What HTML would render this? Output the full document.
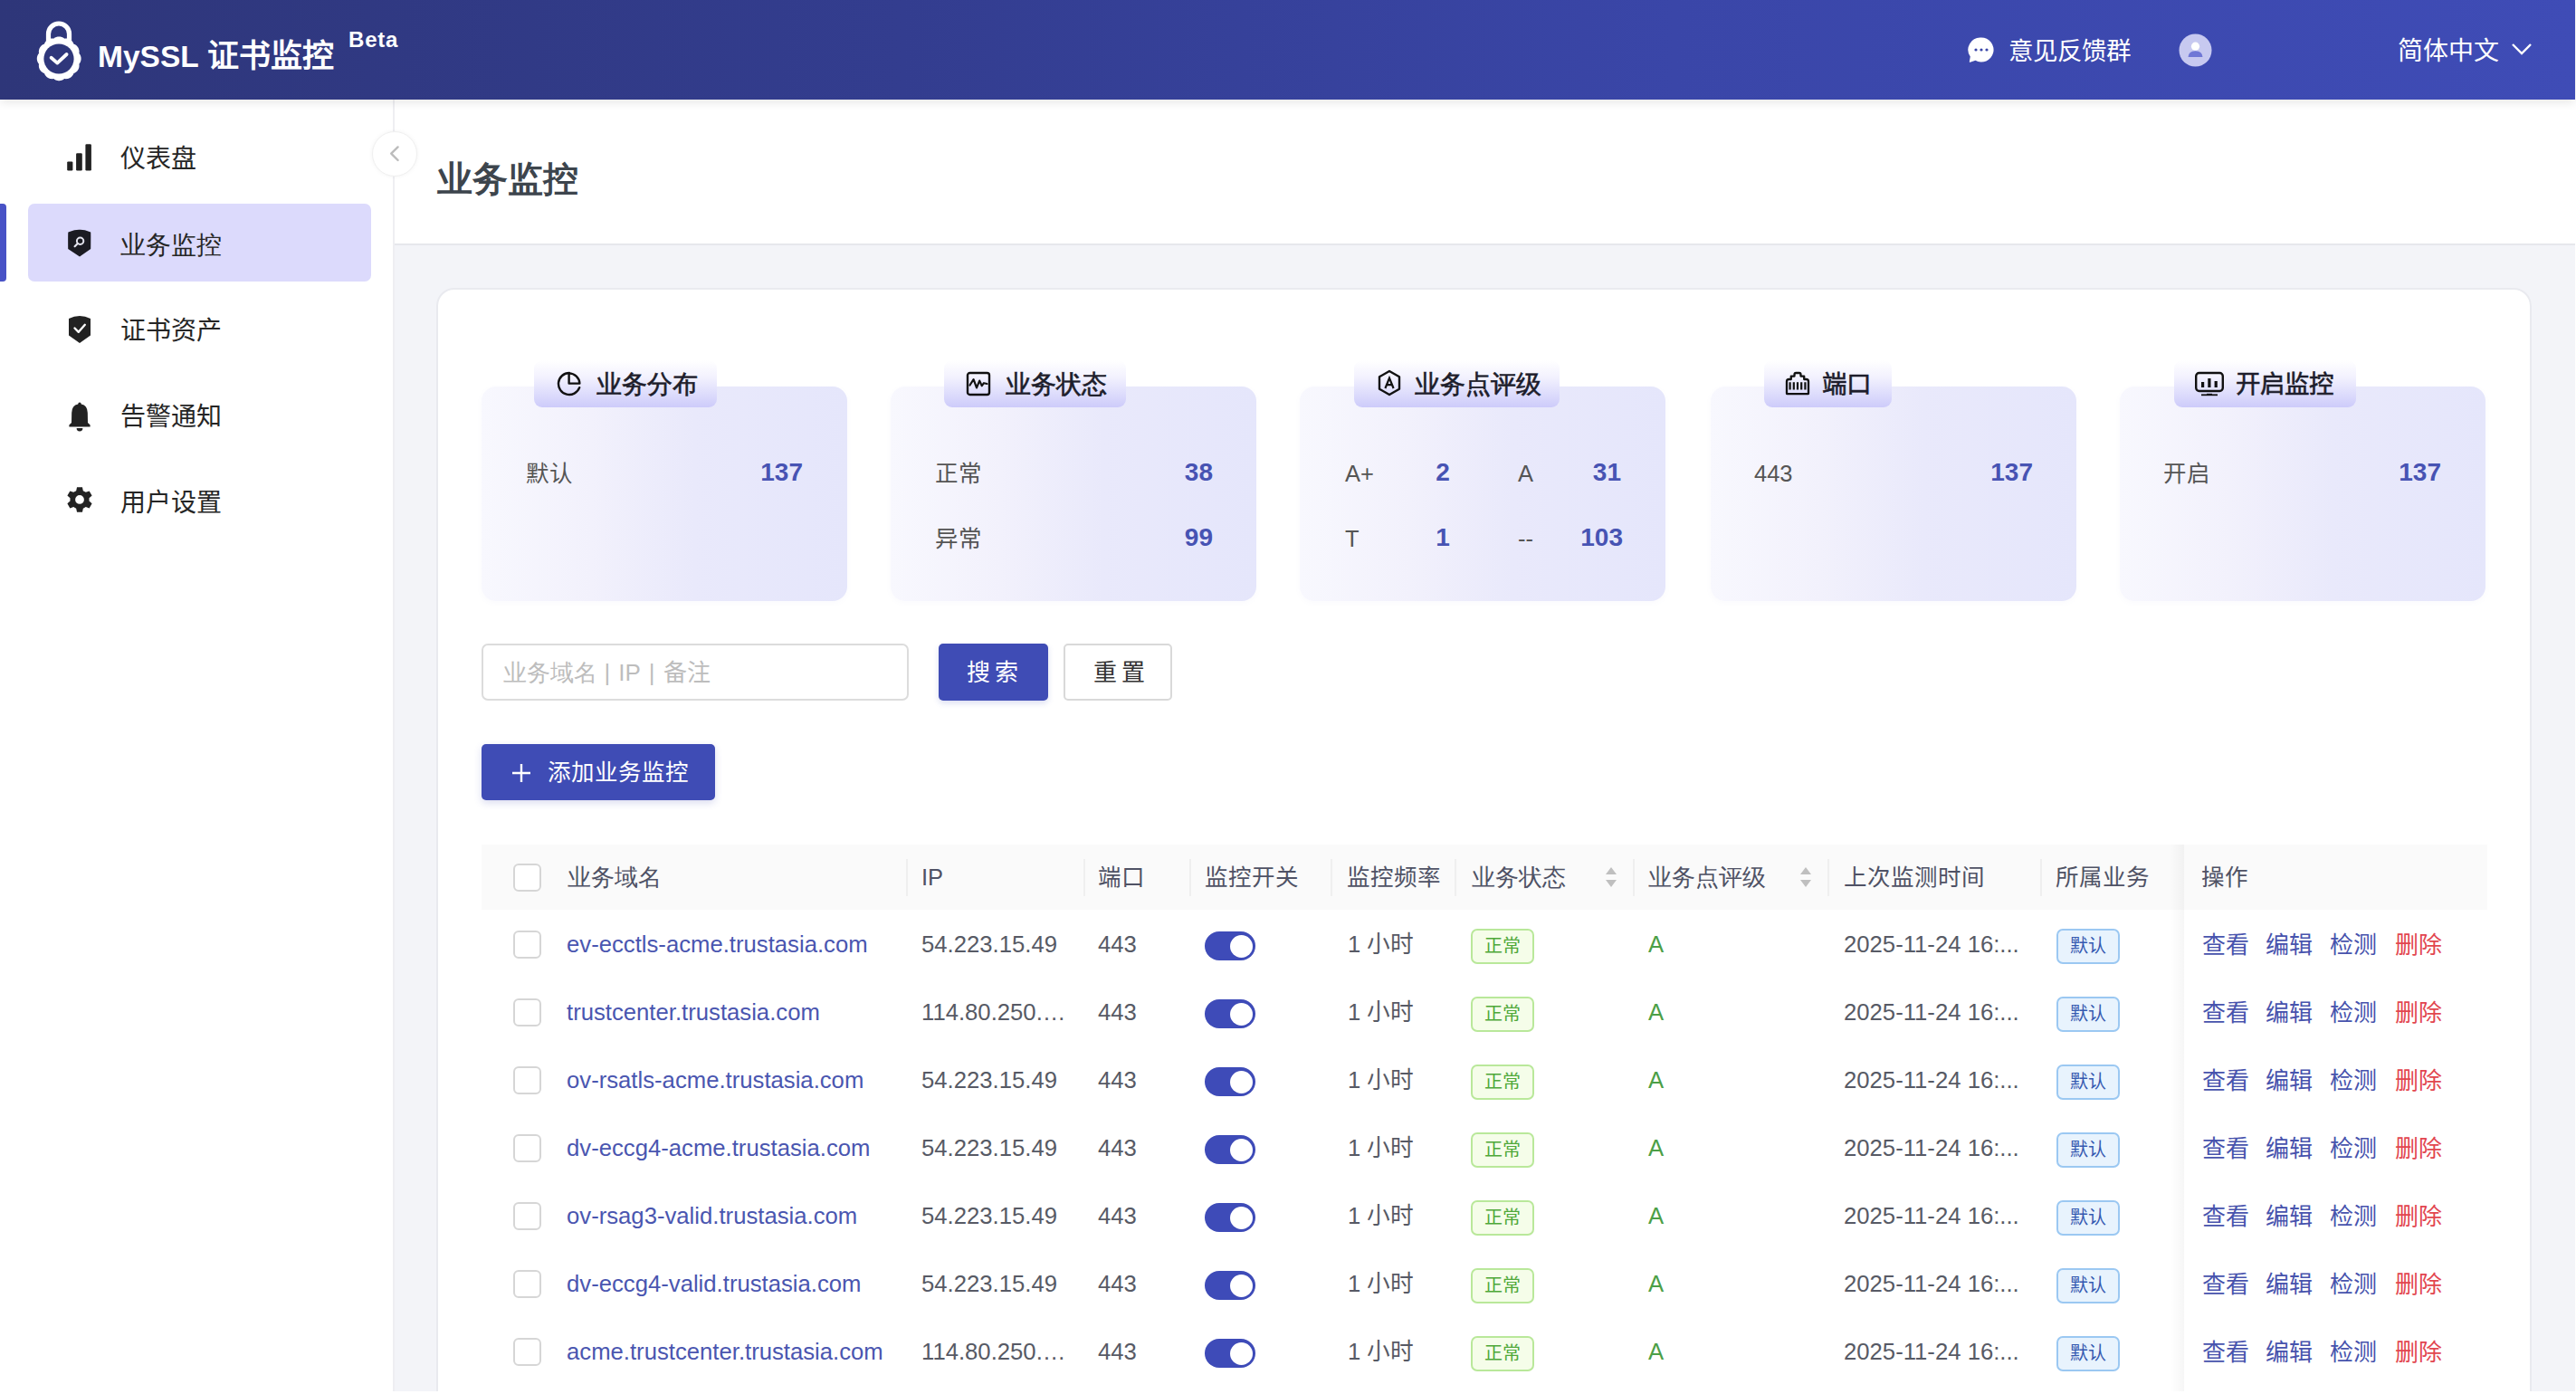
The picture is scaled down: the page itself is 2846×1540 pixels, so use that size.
<!DOCTYPE html>
<html lang="zh-CN">
<head>
<meta charset="utf-8">
<title>MySSL 证书监控</title>
<style>
*{box-sizing:border-box;margin:0;padding:0}
html,body{width:2846px;height:1540px;overflow:hidden;background:#fff}
body{position:relative;font-family:"Liberation Sans",sans-serif;color:#222}
.abs{position:absolute}
.t{position:absolute;white-space:nowrap;line-height:1}
/* header */
#hd{left:0;top:0;width:2845px;height:110px;background:linear-gradient(90deg,#2e3679 0%,#333d8f 35%,#3a46a8 65%,#3f4cb6 100%);box-shadow:0 3px 10px rgba(0,0,0,.10);z-index:5}
#side{left:0;top:110px;width:434px;height:1427px;background:#fff}
#sideb{left:434px;top:110px;width:2px;height:1427px;background:#eeeef2}
#main{left:436px;top:110px;width:2409px;height:1427px;background:#f3f4f8}
#ph{left:436px;top:110px;width:2409px;height:161px;background:#fff;border-bottom:2px solid #e6e7ec}
#card{left:482px;top:318px;width:2315px;height:1260px;background:#fff;border:2px solid #e9eaef;border-radius:20px}

.sc{position:absolute;top:427px;width:404px;height:237px;border-radius:16px;background:linear-gradient(90deg,#f8f8fe 0%,#f2f1fc 30%,#e9e9fb 58%,#e5e6fb 100%);box-shadow:0 2px 6px rgba(120,120,200,.04)}
.tab{position:absolute;top:398px;height:52px;border-radius:9px;background:linear-gradient(180deg,rgba(255,255,255,0) 0%,#f3f2fe 35%,#dddcfc 72%,#cdcbfa 100%);}
.tab svg{position:absolute}
.tab .tt{position:absolute;top:13px;font-size:27.5px;line-height:1;font-weight:400;color:#1d1d2b;white-space:nowrap;-webkit-text-stroke:0.6px #1d1d2b}
.lb{position:absolute;font-size:25.5px;line-height:1;color:#555;white-space:nowrap}
.nb{position:absolute;font-size:28px;line-height:1;font-weight:700;color:#4753b3;white-space:nowrap}

.inp{position:absolute;left:532px;top:711px;width:472px;height:63px;border:2px solid #dcdcdc;border-radius:7px;background:#fff}
.btn{position:absolute;top:711px;height:63px;border-radius:5px;font-size:26px;line-height:1;white-space:nowrap}
.th{position:absolute;top:957px;font-size:25.5px;line-height:1;color:#4f5265;white-space:nowrap}
.sep{position:absolute;top:949px;width:2px;height:41px;background:#efefef}
.cb{position:absolute;width:31px;height:31px;border:2px solid #d6d6d6;border-radius:6px;background:#fff}
.td{position:absolute;font-size:25.7px;line-height:1;color:#575a65;white-space:nowrap}
.dm{color:#4a56b0}
.sw{position:absolute;width:56px;height:32px;border-radius:16px;background:#3e4bb8}
.sw:after{content:"";position:absolute;right:3px;top:3.5px;width:25px;height:25px;border-radius:50%;background:#fff}
.tg{position:absolute;width:70px;height:39px;border-radius:7px;font-size:20px;line-height:35px;text-align:center}
.ok{background:#f5fde9;border:2px solid #b9e89a;color:#4fa83a}
.df{background:#e8f3fd;border:2px solid #9bc8f2;color:#3559b0}
.ac{position:absolute;font-size:26px;line-height:1;color:#4753ad;white-space:nowrap}
.del{color:#e2464f}
</style>
</head>
<body>
<div id="main" class="abs"></div>
<div id="side" class="abs"></div>
<div id="sideb" class="abs"></div>
<div id="ph" class="abs"></div>
<div id="card" class="abs"></div>

<div class="abs" style="left:0;top:225px;width:7px;height:86px;background:#4852c6;border-radius:0 4px 4px 0"></div>
<div class="abs" style="left:31px;top:225px;width:379px;height:86px;background:#dcdafc;border-radius:7px"></div>
<svg class="abs" style="left:72px;top:157px" width="32" height="34" viewBox="0 0 32 34">
  <rect x="2.2" y="21.4" width="6.2" height="10.1" rx="1.2" fill="#222"/>
  <rect x="12.1" y="12.2" width="6.7" height="19.3" rx="1.2" fill="#222"/>
  <rect x="22.4" y="2.3" width="6.5" height="29.2" rx="1.2" fill="#222"/>
</svg>
<div class="t" style="left:133px;top:162px;font-size:28px;color:#262626">仪表盘</div>
<svg class="abs" style="left:72px;top:251px" width="32" height="35" viewBox="0 0 32 35">
  <path d="M16 2.8 Q22 2.6 28.2 5.6 Q28.4 6 28.2 24 L16 32.6 L3.2 24 Q3 6 3.4 5.6 Q10 2.6 16 2.8 Z" fill="#1b1b22"/>
  <circle cx="16.6" cy="15.2" r="3.7" fill="none" stroke="#e4e4ee" stroke-width="2"/>
  <path d="M13.8 18 L10.6 21.2" stroke="#e4e4ee" stroke-width="2.2" stroke-linecap="round"/>
</svg>
<div class="t" style="left:133px;top:257px;font-size:28px;color:#262626">业务监控</div>
<svg class="abs" style="left:72px;top:347px" width="32" height="35" viewBox="0 0 32 35">
  <path d="M16 2 Q22 2 28 5 L28 23.5 L16 32 L4 23.5 L4 5 Q10 2 16 2 Z" fill="#222"/>
  <path d="M10.5 15.5 L14.8 19.8 L21.8 11.8" fill="none" stroke="#fff" stroke-width="2.4" stroke-linecap="round" stroke-linejoin="round"/>
</svg>
<div class="t" style="left:133px;top:352px;font-size:28px;color:#262626">证书资产</div>
<svg class="abs" style="left:72px;top:443px" width="32" height="34" viewBox="0 0 32 34">
  <path d="M16 1.5 Q17.6 1.5 17.8 3.6 Q24.6 5 24.8 13 L25 24 L27.6 26.6 L27.6 28.4 L4.4 28.4 L4.4 26.6 L7 24 L7.2 13 Q7.4 5 14.2 3.6 Q14.4 1.5 16 1.5 Z" fill="#222"/>
  <path d="M12.6 30 A3.4 3.4 0 0 0 19.4 30 Z" fill="#222"/>
</svg>
<div class="t" style="left:133px;top:447px;font-size:28px;color:#262626">告警通知</div>
<svg class="abs" style="left:71px;top:536px" width="34" height="34" viewBox="0 0 32 32">
  <path fill="#222" fill-rule="evenodd" d="M13.2 2 L18.8 2 L19.6 5.8 L22.4 7.4 L26 6.1 L28.8 10.9 L25.9 13.5 L25.9 16.5 L28.8 19.1 L26 23.9 L22.4 22.6 L19.6 24.2 L18.8 28 L13.2 28 L12.4 24.2 L9.6 22.6 L6 23.9 L3.2 19.1 L6.1 16.5 L6.1 13.5 L3.2 10.9 L6 6.1 L9.6 7.4 L12.4 5.8 Z M16 10.4 A4.6 4.6 0 1 0 16 19.6 A4.6 4.6 0 1 0 16 10.4 Z"/>
</svg>
<div class="t" style="left:133px;top:542px;font-size:28px;color:#262626">用户设置</div>
<div class="abs" style="left:411px;top:145px;width:50px;height:50px;border-radius:50%;background:#fff;border:1px solid #f0f0f0;box-shadow:0 0 5px rgba(0,0,0,.05)"></div>
<svg class="abs" style="left:426px;top:159px" width="22" height="22" viewBox="0 0 22 22">
  <path d="M13.6 3.4 L6.2 10.6 L13.6 18" fill="none" stroke="#bcbcbc" stroke-width="2.4" stroke-linecap="round" stroke-linejoin="round"/>
</svg>
<div class="t" style="left:483px;top:179px;font-size:38.5px;font-weight:700;color:#3d454d">业务监控</div>


<div id="hd" class="abs">
  <svg class="abs" style="left:40px;top:23px" width="52" height="68" viewBox="0 0 52 68">
    <path d="M13.5 24 V14.5 A11.5 11.5 0 0 1 36.5 14.5 V24" fill="none" stroke="#fff" stroke-width="5.2"/>
    <path fill="#fff" d="M25.20 17.40 L25.63 17.41 L26.05 17.44 L26.47 17.49 L26.89 17.56 L27.31 17.66 L27.73 17.77 L28.13 17.90 L28.54 18.05 L28.94 18.21 L29.33 18.40 L29.71 18.60 L30.08 18.83 L30.45 19.07 L30.80 19.34 L31.13 19.68 L31.58 19.55 L32.02 19.49 L32.46 19.46 L32.89 19.46 L33.33 19.47 L33.76 19.51 L34.19 19.56 L34.61 19.63 L35.03 19.72 L35.44 19.83 L35.85 19.96 L36.25 20.11 L36.64 20.28 L37.03 20.47 L37.40 20.67 L37.76 20.89 L38.12 21.13 L38.46 21.39 L38.79 21.66 L39.10 21.95 L39.40 22.25 L39.69 22.57 L39.97 22.90 L40.23 23.24 L40.47 23.60 L40.70 23.97 L40.92 24.35 L41.11 24.74 L41.28 25.15 L41.39 25.61 L41.85 25.72 L42.26 25.89 L42.65 26.08 L43.03 26.30 L43.40 26.53 L43.76 26.77 L44.10 27.03 L44.43 27.31 L44.75 27.60 L45.05 27.90 L45.34 28.21 L45.61 28.54 L45.87 28.88 L46.11 29.24 L46.33 29.60 L46.53 29.97 L46.72 30.36 L46.89 30.75 L47.04 31.15 L47.17 31.56 L47.28 31.97 L47.37 32.39 L47.44 32.81 L47.49 33.24 L47.53 33.67 L47.54 34.11 L47.54 34.54 L47.51 34.98 L47.45 35.42 L47.32 35.87 L47.66 36.20 L47.93 36.55 L48.17 36.92 L48.40 37.29 L48.60 37.67 L48.79 38.06 L48.95 38.46 L49.10 38.87 L49.23 39.27 L49.34 39.69 L49.44 40.11 L49.51 40.53 L49.56 40.95 L49.59 41.37 L49.60 41.80 L49.59 42.23 L49.56 42.65 L49.51 43.07 L49.44 43.49 L49.34 43.91 L49.23 44.33 L49.10 44.73 L48.95 45.14 L48.79 45.54 L48.60 45.93 L48.40 46.31 L48.17 46.68 L47.93 47.05 L47.66 47.40 L47.32 47.73 L47.45 48.18 L47.51 48.62 L47.54 49.06 L47.54 49.49 L47.53 49.93 L47.49 50.36 L47.44 50.79 L47.37 51.21 L47.28 51.63 L47.17 52.04 L47.04 52.45 L46.89 52.85 L46.72 53.24 L46.53 53.63 L46.33 54.00 L46.11 54.36 L45.87 54.72 L45.61 55.06 L45.34 55.39 L45.05 55.70 L44.75 56.00 L44.43 56.29 L44.10 56.57 L43.76 56.83 L43.40 57.07 L43.03 57.30 L42.65 57.52 L42.26 57.71 L41.85 57.88 L41.39 57.99 L41.28 58.45 L41.11 58.86 L40.92 59.25 L40.70 59.63 L40.47 60.00 L40.23 60.36 L39.97 60.70 L39.69 61.03 L39.40 61.35 L39.10 61.65 L38.79 61.94 L38.46 62.21 L38.12 62.47 L37.76 62.71 L37.40 62.93 L37.03 63.13 L36.64 63.32 L36.25 63.49 L35.85 63.64 L35.44 63.77 L35.03 63.88 L34.61 63.97 L34.19 64.04 L33.76 64.09 L33.33 64.13 L32.89 64.14 L32.46 64.14 L32.02 64.11 L31.58 64.05 L31.13 63.92 L30.80 64.26 L30.45 64.53 L30.08 64.77 L29.71 65.00 L29.33 65.20 L28.94 65.39 L28.54 65.55 L28.13 65.70 L27.73 65.83 L27.31 65.94 L26.89 66.04 L26.47 66.11 L26.05 66.16 L25.63 66.19 L25.20 66.20 L24.77 66.19 L24.35 66.16 L23.93 66.11 L23.51 66.04 L23.09 65.94 L22.67 65.83 L22.27 65.70 L21.86 65.55 L21.46 65.39 L21.07 65.20 L20.69 65.00 L20.32 64.77 L19.95 64.53 L19.60 64.26 L19.27 63.92 L18.82 64.05 L18.38 64.11 L17.94 64.14 L17.51 64.14 L17.07 64.13 L16.64 64.09 L16.21 64.04 L15.79 63.97 L15.37 63.88 L14.96 63.77 L14.55 63.64 L14.15 63.49 L13.76 63.32 L13.37 63.13 L13.00 62.93 L12.64 62.71 L12.28 62.47 L11.94 62.21 L11.61 61.94 L11.30 61.65 L11.00 61.35 L10.71 61.03 L10.43 60.70 L10.17 60.36 L9.93 60.00 L9.70 59.63 L9.48 59.25 L9.29 58.86 L9.12 58.45 L9.01 57.99 L8.55 57.88 L8.14 57.71 L7.75 57.52 L7.37 57.30 L7.00 57.07 L6.64 56.83 L6.30 56.57 L5.97 56.29 L5.65 56.00 L5.35 55.70 L5.06 55.39 L4.79 55.06 L4.53 54.72 L4.29 54.36 L4.07 54.00 L3.87 53.63 L3.68 53.24 L3.51 52.85 L3.36 52.45 L3.23 52.04 L3.12 51.63 L3.03 51.21 L2.96 50.79 L2.91 50.36 L2.87 49.93 L2.86 49.49 L2.86 49.06 L2.89 48.62 L2.95 48.18 L3.08 47.73 L2.74 47.40 L2.47 47.05 L2.23 46.68 L2.00 46.31 L1.80 45.93 L1.61 45.54 L1.45 45.14 L1.30 44.73 L1.17 44.33 L1.06 43.91 L0.96 43.49 L0.89 43.07 L0.84 42.65 L0.81 42.23 L0.80 41.80 L0.81 41.37 L0.84 40.95 L0.89 40.53 L0.96 40.11 L1.06 39.69 L1.17 39.27 L1.30 38.87 L1.45 38.46 L1.61 38.06 L1.80 37.67 L2.00 37.29 L2.23 36.92 L2.47 36.55 L2.74 36.20 L3.08 35.87 L2.95 35.42 L2.89 34.98 L2.86 34.54 L2.86 34.11 L2.87 33.67 L2.91 33.24 L2.96 32.81 L3.03 32.39 L3.12 31.97 L3.23 31.56 L3.36 31.15 L3.51 30.75 L3.68 30.36 L3.87 29.97 L4.07 29.60 L4.29 29.24 L4.53 28.88 L4.79 28.54 L5.06 28.21 L5.35 27.90 L5.65 27.60 L5.97 27.31 L6.30 27.03 L6.64 26.77 L7.00 26.53 L7.37 26.30 L7.75 26.08 L8.14 25.89 L8.55 25.72 L9.01 25.61 L9.12 25.15 L9.29 24.74 L9.48 24.35 L9.70 23.97 L9.93 23.60 L10.17 23.24 L10.43 22.90 L10.71 22.57 L11.00 22.25 L11.30 21.95 L11.61 21.66 L11.94 21.39 L12.28 21.13 L12.64 20.89 L13.00 20.67 L13.37 20.47 L13.76 20.28 L14.15 20.11 L14.55 19.96 L14.96 19.83 L15.37 19.72 L15.79 19.63 L16.21 19.56 L16.64 19.51 L17.07 19.47 L17.51 19.46 L17.94 19.46 L18.38 19.49 L18.82 19.55 L19.27 19.68 L19.60 19.34 L19.95 19.07 L20.32 18.83 L20.69 18.60 L21.07 18.40 L21.46 18.21 L21.86 18.05 L22.27 17.90 L22.67 17.77 L23.09 17.66 L23.51 17.56 L23.93 17.49 L24.35 17.44 L24.77 17.41 L25.20 17.40 Z"/>
    <circle cx="25" cy="42" r="16.6" fill="#2f377b"/>
    <path d="M16.6 40.8 L23.3 46.6 L33.6 37" fill="none" stroke="#fff" stroke-width="3.8" stroke-linecap="round" stroke-linejoin="round"/>
  </svg>
  <div class="t" style="left:108px;top:44px;font-size:35px;font-weight:700;color:#fff"><span style="font-size:33.5px">MySSL</span> 证书监控</div>
  <div class="t" style="left:385px;top:32px;font-size:24px;font-weight:700;color:#fff;letter-spacing:0.8px">Beta</div>
  <svg class="abs" style="left:2174px;top:40px" width="30" height="30" viewBox="0 0 30 30">
    <path fill="#fff" d="M15 1.5 A13.5 13.5 0 1 1 8.5 26.8 L2.6 28.8 Q1.6 29 1.9 27.8 L2.8 22.6 A13.5 13.5 0 0 1 15 1.5 Z"/>
    <circle cx="9" cy="15" r="1.6" fill="#3a46a8"/><circle cx="15" cy="15" r="1.6" fill="#3a46a8"/><circle cx="21" cy="15" r="1.6" fill="#3a46a8"/>
  </svg>
  <div class="t" style="left:2219px;top:43px;font-size:27.5px;color:#fff">意见反馈群</div>
  <svg class="abs" style="left:2407px;top:37px" width="37" height="37" viewBox="0 0 37 37">
    <circle cx="18.5" cy="18.5" r="18" fill="#c7c9f0"/>
    <circle cx="18.5" cy="14.2" r="4.6" fill="#fff"/>
    <path d="M10.5 26 Q11 19.2 18.5 19.2 Q26 19.2 26.5 26 Z" fill="#7078d6"/>
  </svg>
  <div class="t" style="left:2649px;top:43px;font-size:28px;color:#fff">简体中文</div>
  <svg class="abs" style="left:2774px;top:46px" width="24" height="16" viewBox="0 0 24 16">
    <path d="M2 3 L12 13 L22 3" fill="none" stroke="#fff" stroke-width="2.4"/>
  </svg>
</div>

<div class="sc" style="left:532px"></div>
<div class="sc" style="left:984px"></div>
<div class="sc" style="left:1436px"></div>
<div class="sc" style="left:1890px"></div>
<div class="sc" style="left:2342px"></div>
<div class="tab" style="left:590px;width:202px"><svg style="left:25px;top:12px" width="28" height="28" viewBox="0 0 28 28"><path d="M14 2 A12 12 0 1 0 25.2 18.2" fill="none" stroke="#111" stroke-width="2.4" stroke-linecap="round"/><path d="M13.6 2.4 V13.6 H25.4 A11.8 11.8 0 0 0 13.6 2.4" fill="none" stroke="#111" stroke-width="2.4" stroke-linejoin="round"/></svg><div class="tt" style="left:69px">业务分布</div></div>
<div class="tab" style="left:1043px;width:201px"><svg style="left:24px;top:12px" width="28" height="28" viewBox="0 0 28 28"><rect x="2" y="2" width="24" height="24" rx="2.5" fill="none" stroke="#111" stroke-width="2.4"/><path d="M4.5 15.5 L8.6 9.2 L12 18.4 L15.2 10.6 L17.8 16.2 L20 13.2 L23.5 14" fill="none" stroke="#111" stroke-width="2.2" stroke-linejoin="round" stroke-linecap="round"/></svg><div class="tt" style="left:68px">业务状态</div></div>
<div class="tab" style="left:1496px;width:227px"><svg style="left:25px;top:10px" width="28" height="31" viewBox="0 0 28 31"><path d="M14 2 L25 8.3 V21.7 L14 28 L3 21.7 V8.3 Z" fill="none" stroke="#111" stroke-width="2.4" stroke-linejoin="round"/><path d="M9.4 21 L14 9.6 L18.6 21 M11 17.2 H17" fill="none" stroke="#111" stroke-width="2.2"/></svg><div class="tt" style="left:67px">业务点评级</div></div>
<div class="tab" style="left:1949px;width:141px"><svg style="left:22px;top:10px" width="30" height="30" viewBox="0 0 30 30"><path d="M3 26.5 V13.5 Q3 11 5.5 11 H7.8 V7.6 H11.5 V5.8 Q11.5 4 13.2 4 H16.8 Q18.5 4 18.5 5.8 V7.6 H22.2 V11 H24.5 Q27 11 27 13.5 V26.5 Q27 27.2 26.3 27.2 H3.7 Q3 27.2 3 26.5 Z" fill="none" stroke="#111" stroke-width="2.3" stroke-linejoin="round"/><path d="M6.6 14.2 V22.4 M10.8 14.2 V22.4 M15 14.2 V22.4 M19.2 14.2 V22.4 M23.4 14.2 V22.4" stroke="#111" stroke-width="2.2"/></svg><div class="tt" style="left:64px">端口</div></div>
<div class="tab" style="left:2402px;width:201px"><svg style="left:22px;top:12px" width="34" height="30" viewBox="0 0 34 30"><rect x="2.2" y="2" width="29.6" height="20" rx="3.5" fill="none" stroke="#111" stroke-width="2.4"/><rect x="8" y="12" width="3.2" height="6" fill="#111"/><rect x="15.3" y="8" width="3.2" height="10" fill="#111"/><rect x="22.6" y="11" width="3.2" height="7" fill="#111"/><path d="M8 26.3 H26" stroke="#111" stroke-width="1.8"/><rect x="14" y="24.8" width="6" height="2" fill="#111"/></svg><div class="tt" style="left:68px">开启监控</div></div>
<div class="lb" style="left:581px;top:511px">默认</div>
<div class="nb" style="left:687px;width:200px;text-align:right;top:508px">137</div>
<div class="lb" style="left:1033px;top:511px">正常</div>
<div class="nb" style="left:1140px;width:200px;text-align:right;top:508px">38</div>
<div class="lb" style="left:1033px;top:583px">异常</div>
<div class="nb" style="left:1140px;width:200px;text-align:right;top:580px">99</div>
<div class="lb" style="left:1486px;top:511px">A+</div>
<div class="nb" style="left:1494px;width:200px;text-align:center;top:508px">2</div>
<div class="lb" style="left:1677px;top:511px">A</div>
<div class="nb" style="left:1591px;width:200px;text-align:right;top:508px">31</div>
<div class="lb" style="left:1486px;top:583px">T</div>
<div class="nb" style="left:1494px;width:200px;text-align:center;top:580px">1</div>
<div class="lb" style="left:1677px;top:583px">--</div>
<div class="nb" style="left:1593px;width:200px;text-align:right;top:580px">103</div>
<div class="lb" style="left:1938px;top:511px">443</div>
<div class="nb" style="left:2046px;width:200px;text-align:right;top:508px">137</div>
<div class="lb" style="left:2390px;top:511px">开启</div>
<div class="nb" style="left:2497px;width:200px;text-align:right;top:508px">137</div>
<div class="inp"><div class="t" style="left:22px;top:17px;font-size:26px;color:#bdbdbd">业务域名<span style="margin:0 9px 0 7.5px">|</span>IP<span style="margin:0 9.5px 0 9px">|</span>备注</div></div>
<div class="btn" style="left:1037px;width:121px;background:#3f4cb5;color:#fff;box-shadow:0 3px 6px rgba(63,76,181,.18)"><div class="t" style="left:31px;top:19px;font-size:26px;color:#fff;letter-spacing:5px">搜索</div></div>
<div class="btn" style="left:1175px;width:120px;background:#fff;border:2px solid #d9d9d9"><div class="t" style="left:31px;top:17px;font-size:26px;color:#333;letter-spacing:5px">重置</div></div>
<div class="btn" style="left:532px;top:822px;width:258px;height:62px;background:#3f4cb5;box-shadow:0 3px 8px rgba(63,76,181,.20)"><svg class="abs" style="left:32px;top:20px" width="24" height="24" viewBox="0 0 24 24"><path d="M12 2 V22 M2 12 H22" stroke="#fff" stroke-width="2.4"/></svg><div class="t" style="left:73px;top:19px;font-size:25.5px;color:#fff">添加业务监控</div></div>
<div class="abs" style="left:532px;top:933px;width:2216px;height:72px;background:#fafafa"></div>
<div class="cb" style="left:567px;top:954px"></div>
<div class="th" style="left:627px">业务域名</div>
<div class="th" style="left:1018px">IP</div>
<div class="th" style="left:1213px">端口</div>
<div class="th" style="left:1331px">监控开关</div>
<div class="th" style="left:1488px">监控频率</div>
<div class="th" style="left:1626px">业务状态</div>
<div class="th" style="left:1821px">业务点评级</div>
<div class="th" style="left:2037px">上次监测时间</div>
<div class="th" style="left:2271px">所属业务</div>
<div class="th" style="left:2432px">操作</div>
<div class="sep" style="left:1001px"></div>
<div class="sep" style="left:1197px"></div>
<div class="sep" style="left:1314px"></div>
<div class="sep" style="left:1470px"></div>
<div class="sep" style="left:1607px"></div>
<div class="sep" style="left:1804px"></div>
<div class="sep" style="left:2019px"></div>
<div class="sep" style="left:2254px"></div>
<svg class="abs" style="left:1773px;top:956px" width="14" height="26" viewBox="0 0 14 26"><path d="M7 2 L13 10 H1 Z M1 16 H13 L7 24 Z" fill="#bfbfbf"/></svg>
<svg class="abs" style="left:1988px;top:956px" width="14" height="26" viewBox="0 0 14 26"><path d="M7 2 L13 10 H1 Z M1 16 H13 L7 24 Z" fill="#bfbfbf"/></svg>
<div class="abs" style="left:2398px;top:933px;width:15px;height:620px;background:linear-gradient(90deg,rgba(0,0,0,0),rgba(0,0,0,.035))"></div>
<div class="cb" style="left:567px;top:1028px"></div>
<div class="td dm" style="left:626px;top:1031px">ev-ecctls-acme.trustasia.com</div>
<div class="td" style="left:1018px;top:1031px">54.223.15.49</div>
<div class="td" style="left:1213px;top:1031px">443</div>
<div class="sw" style="left:1331px;top:1029px"></div>
<div class="td" style="left:1489px;top:1031px">1 小时</div>
<div class="tg ok" style="left:1625px;top:1026px">正常</div>
<div class="td" style="left:1821px;top:1031px;color:#4c9f47">A</div>
<div class="td" style="left:2037px;top:1031px">2025-11-24 16:...</div>
<div class="tg df" style="left:2272px;top:1026px">默认</div>
<div class="ac" style="left:2433px;top:1031px">查看</div>
<div class="ac" style="left:2503px;top:1031px">编辑</div>
<div class="ac" style="left:2574px;top:1031px">检测</div>
<div class="ac del" style="left:2646px;top:1031px">删除</div>
<div class="cb" style="left:567px;top:1103px"></div>
<div class="td dm" style="left:626px;top:1106px">trustcenter.trustasia.com</div>
<div class="td" style="left:1018px;top:1106px">114.80.250.…</div>
<div class="td" style="left:1213px;top:1106px">443</div>
<div class="sw" style="left:1331px;top:1104px"></div>
<div class="td" style="left:1489px;top:1106px">1 小时</div>
<div class="tg ok" style="left:1625px;top:1101px">正常</div>
<div class="td" style="left:1821px;top:1106px;color:#4c9f47">A</div>
<div class="td" style="left:2037px;top:1106px">2025-11-24 16:...</div>
<div class="tg df" style="left:2272px;top:1101px">默认</div>
<div class="ac" style="left:2433px;top:1106px">查看</div>
<div class="ac" style="left:2503px;top:1106px">编辑</div>
<div class="ac" style="left:2574px;top:1106px">检测</div>
<div class="ac del" style="left:2646px;top:1106px">删除</div>
<div class="cb" style="left:567px;top:1178px"></div>
<div class="td dm" style="left:626px;top:1181px">ov-rsatls-acme.trustasia.com</div>
<div class="td" style="left:1018px;top:1181px">54.223.15.49</div>
<div class="td" style="left:1213px;top:1181px">443</div>
<div class="sw" style="left:1331px;top:1179px"></div>
<div class="td" style="left:1489px;top:1181px">1 小时</div>
<div class="tg ok" style="left:1625px;top:1176px">正常</div>
<div class="td" style="left:1821px;top:1181px;color:#4c9f47">A</div>
<div class="td" style="left:2037px;top:1181px">2025-11-24 16:...</div>
<div class="tg df" style="left:2272px;top:1176px">默认</div>
<div class="ac" style="left:2433px;top:1181px">查看</div>
<div class="ac" style="left:2503px;top:1181px">编辑</div>
<div class="ac" style="left:2574px;top:1181px">检测</div>
<div class="ac del" style="left:2646px;top:1181px">删除</div>
<div class="cb" style="left:567px;top:1253px"></div>
<div class="td dm" style="left:626px;top:1256px">dv-eccg4-acme.trustasia.com</div>
<div class="td" style="left:1018px;top:1256px">54.223.15.49</div>
<div class="td" style="left:1213px;top:1256px">443</div>
<div class="sw" style="left:1331px;top:1254px"></div>
<div class="td" style="left:1489px;top:1256px">1 小时</div>
<div class="tg ok" style="left:1625px;top:1251px">正常</div>
<div class="td" style="left:1821px;top:1256px;color:#4c9f47">A</div>
<div class="td" style="left:2037px;top:1256px">2025-11-24 16:...</div>
<div class="tg df" style="left:2272px;top:1251px">默认</div>
<div class="ac" style="left:2433px;top:1256px">查看</div>
<div class="ac" style="left:2503px;top:1256px">编辑</div>
<div class="ac" style="left:2574px;top:1256px">检测</div>
<div class="ac del" style="left:2646px;top:1256px">删除</div>
<div class="cb" style="left:567px;top:1328px"></div>
<div class="td dm" style="left:626px;top:1331px">ov-rsag3-valid.trustasia.com</div>
<div class="td" style="left:1018px;top:1331px">54.223.15.49</div>
<div class="td" style="left:1213px;top:1331px">443</div>
<div class="sw" style="left:1331px;top:1329px"></div>
<div class="td" style="left:1489px;top:1331px">1 小时</div>
<div class="tg ok" style="left:1625px;top:1326px">正常</div>
<div class="td" style="left:1821px;top:1331px;color:#4c9f47">A</div>
<div class="td" style="left:2037px;top:1331px">2025-11-24 16:...</div>
<div class="tg df" style="left:2272px;top:1326px">默认</div>
<div class="ac" style="left:2433px;top:1331px">查看</div>
<div class="ac" style="left:2503px;top:1331px">编辑</div>
<div class="ac" style="left:2574px;top:1331px">检测</div>
<div class="ac del" style="left:2646px;top:1331px">删除</div>
<div class="cb" style="left:567px;top:1403px"></div>
<div class="td dm" style="left:626px;top:1406px">dv-eccg4-valid.trustasia.com</div>
<div class="td" style="left:1018px;top:1406px">54.223.15.49</div>
<div class="td" style="left:1213px;top:1406px">443</div>
<div class="sw" style="left:1331px;top:1404px"></div>
<div class="td" style="left:1489px;top:1406px">1 小时</div>
<div class="tg ok" style="left:1625px;top:1401px">正常</div>
<div class="td" style="left:1821px;top:1406px;color:#4c9f47">A</div>
<div class="td" style="left:2037px;top:1406px">2025-11-24 16:...</div>
<div class="tg df" style="left:2272px;top:1401px">默认</div>
<div class="ac" style="left:2433px;top:1406px">查看</div>
<div class="ac" style="left:2503px;top:1406px">编辑</div>
<div class="ac" style="left:2574px;top:1406px">检测</div>
<div class="ac del" style="left:2646px;top:1406px">删除</div>
<div class="cb" style="left:567px;top:1478px"></div>
<div class="td dm" style="left:626px;top:1481px">acme.trustcenter.trustasia.com</div>
<div class="td" style="left:1018px;top:1481px">114.80.250.…</div>
<div class="td" style="left:1213px;top:1481px">443</div>
<div class="sw" style="left:1331px;top:1479px"></div>
<div class="td" style="left:1489px;top:1481px">1 小时</div>
<div class="tg ok" style="left:1625px;top:1476px">正常</div>
<div class="td" style="left:1821px;top:1481px;color:#4c9f47">A</div>
<div class="td" style="left:2037px;top:1481px">2025-11-24 16:...</div>
<div class="tg df" style="left:2272px;top:1476px">默认</div>
<div class="ac" style="left:2433px;top:1481px">查看</div>
<div class="ac" style="left:2503px;top:1481px">编辑</div>
<div class="ac" style="left:2574px;top:1481px">检测</div>
<div class="ac del" style="left:2646px;top:1481px">删除</div>
<div class="abs" style="left:0;top:1537px;width:2846px;height:3px;background:#fff"></div>
<div class="abs" style="left:2845px;top:0;width:1px;height:1540px;background:#fff"></div>
<script>
(function(){
  try{
    var c=document.createElement('canvas').getContext('2d');
    c.font='100px "Liberation Sans", sans-serif';
    var w=c.measureText('\u4e1a').width;
    if(w>92) return;
    var re=/[\u3000-\u9fff\uff00-\uffef]/;
    var walker=document.createTreeWalker(document.body,NodeFilter.SHOW_TEXT,null);
    var nodes=[],n;
    while((n=walker.nextNode())){ if(re.test(n.nodeValue)) nodes.push(n); }
    nodes.forEach(function(t){
      var s=t.nodeValue, frag=document.createDocumentFragment(), buf='';
      for(var i=0;i<s.length;i++){
        var ch=s[i];
        if(re.test(ch)){
          if(buf){frag.appendChild(document.createTextNode(buf));buf='';}
          var sp=document.createElement('span');
          sp.style.cssText='display:inline-block;width:1em;text-align:center;letter-spacing:0';
          sp.textContent=ch; frag.appendChild(sp);
        } else buf+=ch;
      }
      if(buf) frag.appendChild(document.createTextNode(buf));
      t.parentNode.replaceChild(frag,t);
    });
  }catch(e){}
})();
</script>
</body>
</html>
